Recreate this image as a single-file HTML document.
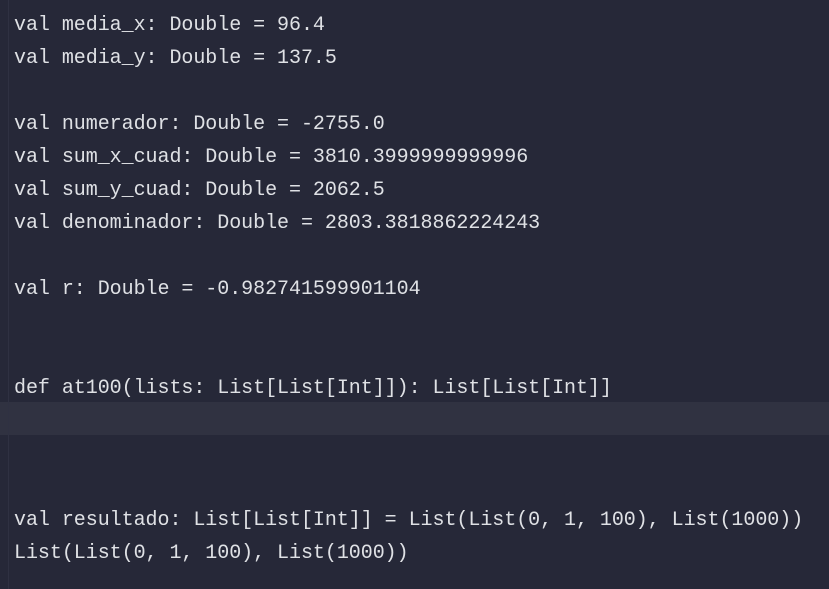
<!DOCTYPE html>
<html><head><meta charset="utf-8"><style>
html,body{margin:0;padding:0;background:#262838;width:829px;height:589px;overflow:hidden;}
.vl{position:absolute;left:8px;top:0;width:1px;height:589px;background:#2f3142;}
.hl{position:absolute;left:0;top:402px;width:829px;height:33px;background:#303241;}
pre{position:absolute;left:14px;top:9px;margin:0;font-family:"Liberation Mono",monospace;font-size:20px;line-height:33px;letter-spacing:-0.045px;color:#dfe1e5;}
</style></head><body>
<div class="hl"></div><div class="vl"></div>
<pre>val media_x: Double = 96.4
val media_y: Double = 137.5

val numerador: Double = -2755.0
val sum_x_cuad: Double = 3810.3999999999996
val sum_y_cuad: Double = 2062.5
val denominador: Double = 2803.3818862224243

val r: Double = -0.982741599901104


def at100(lists: List[List[Int]]): List[List[Int]]



val resultado: List[List[Int]] = List(List(0, 1, 100), List(1000))
List(List(0, 1, 100), List(1000))</pre>
</body></html>
